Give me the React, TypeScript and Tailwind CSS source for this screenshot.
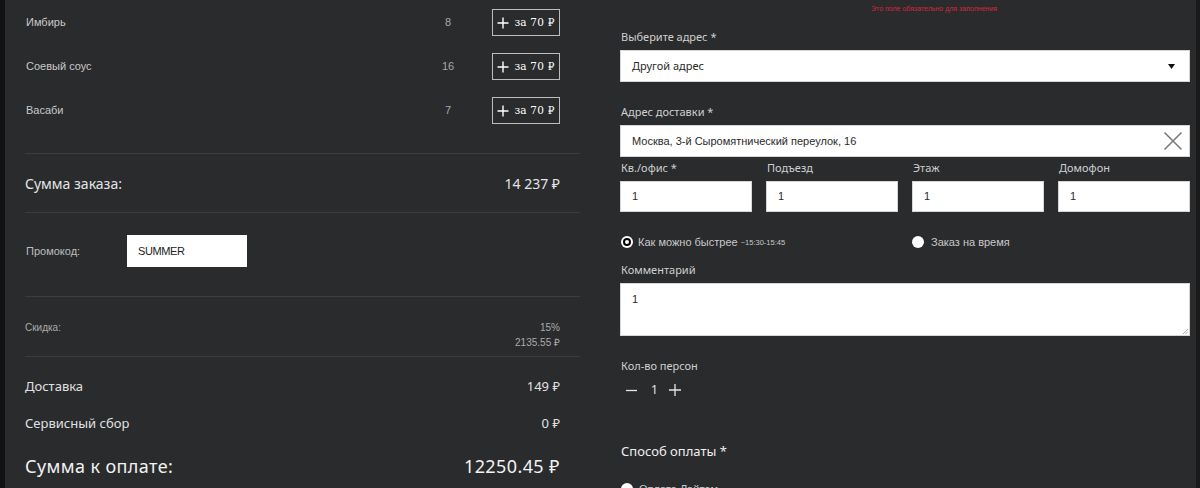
import React from "react";

const extras = [
  { name: "Имбирь", count: 8 },
  { name: "Соевый соус", count: 16 },
  { name: "Васаби", count: 7 },
];

const aptFields = [
  { label: "Кв./офис *", value: "1" },
  { label: "Подъезд", value: "1" },
  { label: "Этаж", value: "1" },
  { label: "Домофон", value: "1" },
];

const sans = "font-['Liberation_Sans',Arial,sans-serif]";
const ui = "font-['Noto_Sans','Open_Sans',sans-serif]";

function AddButton() {
  return (
    <button className="flex h-[27px] w-[68px] items-center justify-center gap-[5px] border border-[#bdbdbd] text-white">
      <svg width="12" height="12" viewBox="0 0 12 12" className="shrink-0">
        <path d="M6 0.5V11.5M0.5 6H11.5" stroke="white" strokeWidth="1.4" />
      </svg>
      <span className="font-['DejaVu_Serif',serif] text-[10.5px] tracking-[0.2px]">за 70 ₽</span>
    </button>
  );
}

function Divider() {
  return <div className="h-px w-full bg-[#3c3d40]" />;
}

function OrderSummary() {
  return (
    <div className={`flex w-[555px] flex-col ${sans}`}>
      <div className="pb-[21px]">
        {extras.map((e) => (
          <div key={e.name} className="flex h-[44px] items-center pr-[20px]">
            <span className="flex-1 pl-px text-[11px] text-[#c9c9c9]">{e.name}</span>
            <span className="w-[30px] text-center text-[11px] text-[#a9a9a9]">{e.count}</span>
            <div className="ml-[29px] pt-px">
              <AddButton />
            </div>
          </div>
        ))}
      </div>
      <Divider />
      <div className={`flex h-[58px] items-center justify-between pr-[20px] ${ui} text-[14px] text-[#e4e4e4]`}>
        <span>Сумма заказа:</span>
        <span>14 237 ₽</span>
      </div>
      <Divider />
      <div className="flex h-[83px] items-start pt-[22px]">
        <span className="w-[102px] pl-px text-[11px] leading-[32px] text-[#bdbdbd]">Промокод:</span>
        <input
          readOnly
          value="SUMMER"
          className="h-[32px] w-[120px] bg-white pl-[11px] text-[11px] tracking-[-0.4px] text-[#222] outline-none"
        />
      </div>
      <Divider />
      <div className="flex h-[59px] items-start justify-between pr-[20px] pt-[23px] text-[10px] text-[#aaaaaa]">
        <span className="leading-[15px]">Скидка:</span>
        <div className="flex flex-col items-end leading-[15px]">
          <span>15%</span>
          <span>2135.55 ₽</span>
        </div>
      </div>
      <Divider />
      <div className={`flex flex-col pr-[20px] ${ui} text-[#e0e0e0]`}>
        <div className="mt-[20px] flex h-[20px] items-center justify-between text-[13px]">
          <span>Доставка</span>
          <span>149 ₽</span>
        </div>
        <div className="mt-[17px] flex h-[20px] items-center justify-between text-[13px]">
          <span>Сервисный сбор</span>
          <span>0 ₽</span>
        </div>
        <div className="mt-[20px] flex h-[24px] items-center justify-between text-[18px] tracking-[0.4px] text-[#f2f2f2]">
          <span>Сумма к оплате:</span>
          <span>12250.45 ₽</span>
        </div>
      </div>
    </div>
  );
}

function Label({ children, className = "" }: { children: React.ReactNode; className?: string }) {
  return <div className={`h-[14px] pl-px text-[11px] leading-[14px] text-[#cfcfcf] ${ui} ${className}`}>{children}</div>;
}

function TextBox({ value, className = "" }: { value: string; className?: string }) {
  return (
    <div className={`flex items-center border border-[#d6d6d6] bg-white pl-[11px] text-[11px] text-[#2a2a2a] ${sans} ${className}`}>
      {value}
    </div>
  );
}

function DeliveryForm() {
  return (
    <div className="flex w-[570px] flex-col">
      <div className={`h-[18px] pl-[251px] text-[7px] leading-[18px] text-[#d0283f] ${sans}`}>
        Это поле обязательно для заполнения
      </div>

      <Label className="mt-[12px] mb-[6px]">Выберите адрес *</Label>
      <div className={`flex h-[32px] items-center justify-between border border-[#d6d6d6] bg-white pl-[11px] pr-[14px] text-[11px] text-[#2a2a2a] ${ui}`}>
        <span>Другой адрес</span>
        <svg width="7" height="5" viewBox="0 0 7 5">
          <path d="M0 0H7L3.5 5Z" fill="#111" />
        </svg>
      </div>

      <Label className="mt-[23px] mb-[6px]">Адрес доставки *</Label>
      <div className={`flex h-[32px] items-center justify-between border border-[#d6d6d6] bg-white pl-[11px] pr-[6px] text-[11px] text-[#2a2a2a] ${sans}`}>
        <span>Москва, 3-й Сыромятнический переулок, 16</span>
        <svg width="20" height="20" viewBox="0 0 20 20">
          <path d="M1.5 1.5L18.5 18.5M18.5 1.5L1.5 18.5" stroke="#7a7a7a" strokeWidth="1.6" />
        </svg>
      </div>

      <div className="mt-[4px] grid grid-cols-4 gap-x-[14px]">
        {aptFields.map((f) => (
          <div key={f.label} className="flex flex-col">
            <Label className="mb-[6px]">{f.label}</Label>
            <TextBox value={f.value} className="h-[31px]" />
          </div>
        ))}
      </div>

      <div className={`mt-[22px] grid h-[16px] grid-cols-2 gap-x-[14px] text-[#c9c9c9] ${sans}`}>
        <div className="flex items-center gap-[5px] pl-px">
          <span className="flex h-[12px] w-[12px] items-center justify-center rounded-full bg-white">
            <span className="h-[8px] w-[8px] rounded-full border-[2px] border-black bg-white" />
          </span>
          <span className="text-[11px]">Как можно быстрее</span>
          <span className="-ml-[2px] text-[7.5px]">~15:30-15:45</span>
        </div>
        <div className="flex items-center gap-[7px]">
          <span className="h-[12px] w-[12px] rounded-full bg-white" />
          <span className="text-[11px]">Заказ на время</span>
        </div>
      </div>

      <Label className="mt-[13px] mb-[6px]">Комментарий</Label>
      <div className={`relative h-[53px] border border-[#d6d6d6] bg-white pl-[11px] pt-[7px] text-[11px] text-[#2a2a2a] ${sans}`}>
        1
        <svg width="6" height="6" viewBox="0 0 6 6" className="absolute bottom-[1px] right-[1px]">
          <path d="M1 6L6 1M3.5 6L6 3.5" stroke="#9a9a9a" strokeWidth="0.8" />
        </svg>
      </div>

      <Label className="mt-[23px]">Кол-во персон</Label>
      <div className={`mt-[9px] flex h-[16px] items-center pl-[6px] text-[12px] text-[#e6e6e6] ${ui}`}>
        <svg width="11" height="11" viewBox="0 0 11 11">
          <path d="M0 5.5H11" stroke="#e6e6e6" strokeWidth="1.3" />
        </svg>
        <span className="ml-[14px]">1</span>
        <svg width="12" height="12" viewBox="0 0 12 12" className="ml-[11px]">
          <path d="M6 0V12M0 6H12" stroke="#e6e6e6" strokeWidth="1.3" />
        </svg>
      </div>

      <div className={`mt-[45px] h-[16px] pl-px text-[13px] leading-[16px] text-[#efefef] ${ui}`}>Способ оплаты *</div>

      <div className={`mt-[22px] flex items-center gap-[6px] pl-px text-[11px] text-[#c9c9c9] ${sans}`}>
        <span className="h-[12px] w-[12px] rounded-full bg-white" />
        <span>Оплата Лайтом</span>
      </div>
    </div>
  );
}

export default function App() {
  return (
    <div className="flex h-[488px] w-[1200px] overflow-hidden bg-[#2a2b2d]">
      <div className="w-[5px] shrink-0 bg-[#121212]" />
      <div className="ml-[20px]">
        <OrderSummary />
      </div>
      <div className="ml-[40px]">
        <DeliveryForm />
      </div>
      <div className="ml-auto w-[4px] shrink-0 bg-[#1a1a1a]" />
    </div>
  );
}
